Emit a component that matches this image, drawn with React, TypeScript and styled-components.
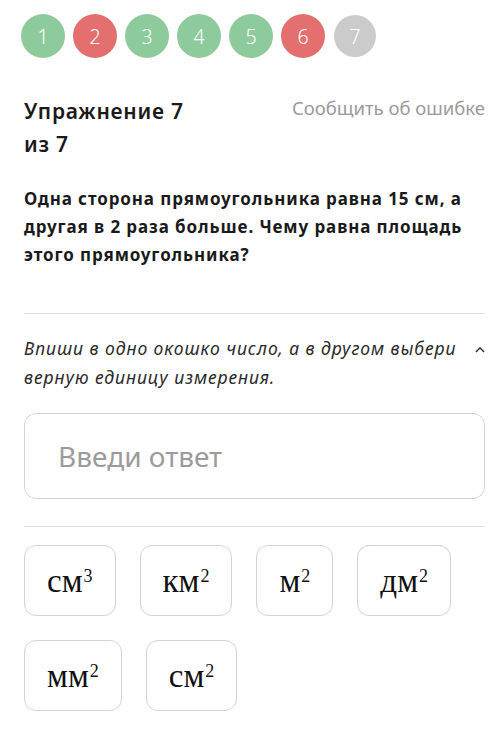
import styled, { createGlobalStyle } from "styled-components";

const Global = createGlobalStyle`
  html, body { margin: 0; padding: 0; background: #fff; }
  body { font-family: "Noto Sans", "Open Sans", sans-serif; color: #1a1a1a; }
`;

type Status = "ok" | "bad" | "todo";

const STEPS: Status[] = ["ok", "bad", "ok", "ok", "ok", "bad", "todo"];
const UNITS: [string, string][] = [
  ["см", "3"],
  ["км", "2"],
  ["м", "2"],
  ["дм", "2"],
  ["мм", "2"],
  ["см", "2"],
];

const STEP_BG: Record<Status, string> = {
  ok: "#8ecb9c",
  bad: "#e46f6f",
  todo: "#cbcbcb",
};

/* ── Styles ── */
const Page = styled.div`
  padding: 14px 15px 20px 24px;
`;

const Steps = styled.div`
  display: flex;
  align-items: center;
  gap: 8px;
  margin-left: -3px;
`;

const Step = styled.div<{ $status: Status }>`
  width: ${(p) => (p.$status === "todo" ? 42 : 44)}px;
  height: ${(p) => (p.$status === "todo" ? 42 : 44)}px;
  margin: 0 ${(p) => (p.$status === "todo" ? 1 : 0)}px;
  border-radius: 50%;
  background: ${(p) => STEP_BG[p.$status]};
  color: #fff;
  font-size: 19.5px;
  font-weight: 300;
  display: flex;
  align-items: center;
  justify-content: center;
`;

const Header = styled.div`
  display: flex;
  justify-content: space-between;
  align-items: flex-start;
  margin-top: 37px;
`;

const Title = styled.h1`
  margin: 0;
  font-size: 21px;
  font-weight: 600;
  line-height: 33px;
  letter-spacing: 0.75px;
  width: 190px;
`;

const Report = styled.span`
  font-size: 18.5px;
  color: #9a9a9a;
  line-height: 24px;
  margin-top: 1px;
`;

const Question = styled.p`
  margin: 24px 0 0;
  font-size: 17px;
  font-weight: 700;
  line-height: 28px;
  letter-spacing: 0.9px;
`;

const Rule = styled.hr<{ $gap: number }>`
  border: none;
  border-top: 1.5px solid #dedede;
  margin: ${(p) => p.$gap}px 0 0;
`;

const Hint = styled.div`
  display: flex;
  align-items: flex-start;
  justify-content: space-between;
  margin-top: 20px;
`;

const HintText = styled.p`
  margin: 0;
  font-size: 17.5px;
  font-style: italic;
  line-height: 29px;
  letter-spacing: 0.95px;
  color: #2a2a2a;
  width: 448px;
`;

const Chevron = styled.svg`
  flex-shrink: 0;
  margin-top: 12px;
`;

const AnswerBox = styled.div`
  box-sizing: border-box;
  margin-top: 21px;
  height: 86px;
  border: 1.5px solid #d4d4d4;
  border-radius: 12px;
  display: flex;
  align-items: center;
  padding-left: 33px;
  font-size: 28px;
  color: #9b9b9b;
`;

const Units = styled.div`
  display: flex;
  flex-wrap: wrap;
  gap: 24px 24px;
  margin-top: 18px;
  width: 440px;
`;

const Unit = styled.button`
  height: 71px;
  padding: 2px 22px 0;
  border: 1.5px solid #d4d4d4;
  border-radius: 12px;
  background: #fff;
  font-family: "Liberation Serif", "DejaVu Serif", serif;
  font-size: 33px;
  color: #111;
  display: flex;
  align-items: center;

  sup {
    font-size: 18px;
    position: relative;
    top: -5px;
    margin-left: 1px;
  }
`;

/* ── Component ── */
export default function App() {
  return (
    <Page>
      <Global />
      <Steps>
        {STEPS.map((s, i) => (
          <Step key={i} $status={s}>
            {i + 1}
          </Step>
        ))}
      </Steps>

      <Header>
        <Title>Упражнение 7 из 7</Title>
        <Report>Сообщить об ошибке</Report>
      </Header>

      <Question>
        Одна сторона прямоугольника равна 15 см, а другая в 2 раза больше. Чему равна площадь
        этого прямоугольника?
      </Question>

      <Rule $gap={44} />

      <Hint>
        <HintText>Впиши в одно окошко число, а в другом выбери верную единицу измерения.</HintText>
        <Chevron width="10" height="7" viewBox="0 0 10 7">
          <path d="M1 6 L5 1.8 L9 6" fill="none" stroke="#333" strokeWidth="1.5" />
        </Chevron>
      </Hint>

      <AnswerBox>Введи ответ</AnswerBox>

      <Rule $gap={27} />

      <Units>
        {UNITS.map(([u, p], i) => (
          <Unit key={i}>
            {u}
            <sup>{p}</sup>
          </Unit>
        ))}
      </Units>
    </Page>
  );
}
